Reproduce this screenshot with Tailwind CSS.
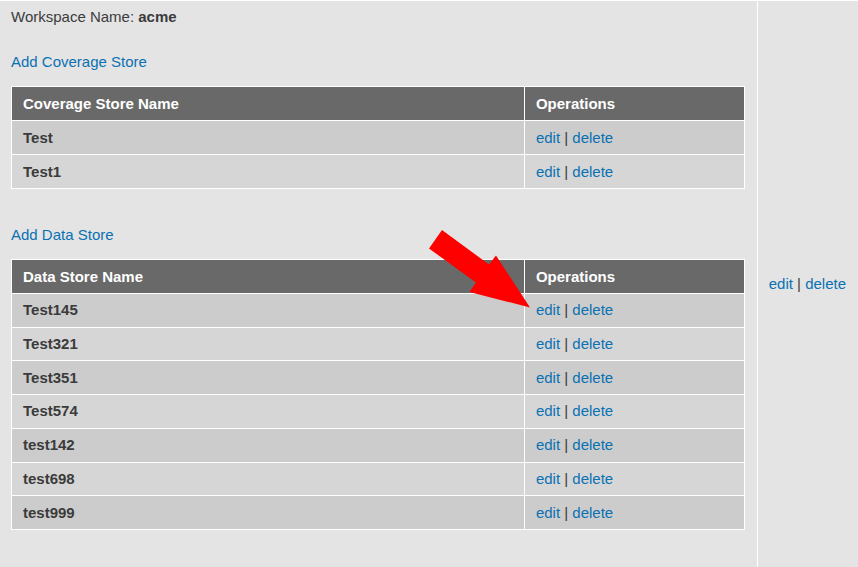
<!DOCTYPE html>
<html lang="en">
<head>
    <meta charset="UTF-8">
    <meta name="viewport" content="width=device-width, initial-scale=1.0">
    <title>Workspace: acme</title>
    <script src="https://cdn.jsdelivr.net/npm/@tailwindcss/browser@4"></script>
</head>
<body class="bg-[#e4e4e4] font-['Liberation_Sans',Arial,sans-serif] text-[15px] leading-5 text-[#3b3b3b]">
<div class="flex min-h-screen border-t border-white">
    <main class="flex-1 pt-[6px] pr-3 pb-8 pl-[11px]">
        <p>Workspace Name: <strong>acme</strong></p>

        <section class="mt-[25px]">
            <a href="#" class="text-[#0a71b3] hover:underline">Add Coverage Store</a>
            <table class="mt-[14px] h-[103px] w-full table-fixed border-collapse border border-white text-left [&_th]:h-[34px] [&_th]:border [&_td]:border [&_th]:border-white [&_td]:border-white [&_th]:px-[11px] [&_td]:px-[11px] [&_a]:text-[#0a71b3]">
                <thead class="bg-[#696969] text-white">
                    <tr><th class="w-[70%]">Coverage Store Name</th><th>Operations</th></tr>
                </thead>
                <tbody class="[&>tr:nth-child(odd)]:bg-[#cccccc] [&>tr:nth-child(even)]:bg-[#d6d6d6]">
                    <tr><td class="font-bold">Test</td><td><a href="#">edit</a> | <a href="#">delete</a></td></tr>
                    <tr><td class="font-bold">Test1</td><td><a href="#">edit</a> | <a href="#">delete</a></td></tr>
                </tbody>
            </table>
        </section>

        <section class="mt-9">
            <a href="#" class="text-[#0a71b3] hover:underline">Add Data Store</a>
            <table class="mt-[14px] h-[271px] w-full table-fixed border-collapse border border-white text-left [&_th]:h-[34px] [&_th]:border [&_td]:border [&_th]:border-white [&_td]:border-white [&_th]:px-[11px] [&_td]:px-[11px] [&_a]:text-[#0a71b3]">
                <thead class="bg-[#696969] text-white">
                    <tr>
                        <th class="w-[70%]">Data Store Name</th>
                        <th class="relative">
                            Operations
                            <!-- arrow pointing at the first edit link -->
                            <svg class="absolute -top-[30px] -left-24 z-10" width="102" height="78" viewBox="0 0 102 78" fill="#ff0000" aria-hidden="true">
                                <polygon points="13,0 60,34.5 67,25.5 101,77.5 40.5,62 47,52.5 0,18.5"/>
                            </svg>
                        </th>
                    </tr>
                </thead>
                <tbody class="[&>tr:nth-child(odd)]:bg-[#cccccc] [&>tr:nth-child(even)]:bg-[#d6d6d6]">
                    <tr><td class="font-bold">Test145</td><td><a href="#">edit</a> | <a href="#">delete</a></td></tr>
                    <tr><td class="font-bold">Test321</td><td><a href="#">edit</a> | <a href="#">delete</a></td></tr>
                    <tr><td class="font-bold">Test351</td><td><a href="#">edit</a> | <a href="#">delete</a></td></tr>
                    <tr><td class="font-bold">Test574</td><td><a href="#">edit</a> | <a href="#">delete</a></td></tr>
                    <tr><td class="font-bold">test142</td><td><a href="#">edit</a> | <a href="#">delete</a></td></tr>
                    <tr><td class="font-bold">test698</td><td><a href="#">edit</a> | <a href="#">delete</a></td></tr>
                    <tr><td class="font-bold">test999</td><td><a href="#">edit</a> | <a href="#">delete</a></td></tr>
                </tbody>
            </table>
        </section>
    </main>

    <aside class="flex items-center border-l border-white pr-3 pl-[11px]">
        <p><a href="#" class="text-[#0a71b3] hover:underline">edit</a> | <a href="#" class="text-[#0a71b3] hover:underline">delete</a></p>
    </aside>
</div>
</body>
</html>
